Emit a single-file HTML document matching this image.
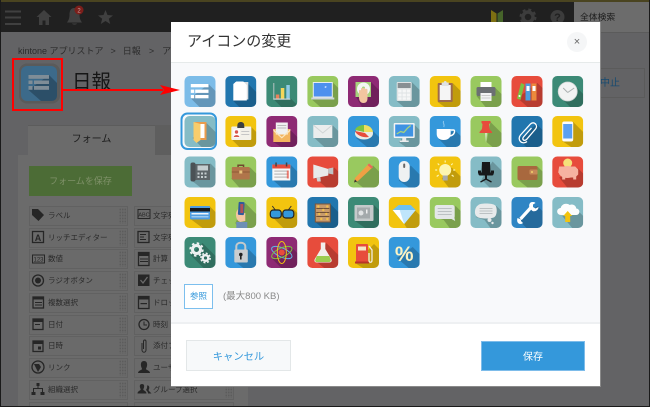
<!DOCTYPE html>
<html lang="ja"><head><meta charset="utf-8"><title>アイコンの変更</title>
<style>
html,body{margin:0;padding:0;width:650px;height:407px;overflow:hidden;background:#636365}
#w{position:absolute;left:0;top:0;width:650px;height:407px;overflow:hidden;background:#636365;font-family:"Liberation Sans","Noto Sans CJK JP",sans-serif}
.a{position:absolute;white-space:nowrap}
.row{position:absolute;width:99px;height:20px;box-sizing:border-box;background:#6a6a6a;border:1px solid #616161}
.row span{position:absolute;left:18px;top:0;font-size:7.500px;line-height:18px;color:#2a2a2a;white-space:nowrap}
.row i{position:absolute;right:1px;top:1px;width:7px;height:16px;background:radial-gradient(circle,#5c5c5c .8px,transparent 1px) 0 0/2.500px 3px}
svg{position:absolute;left:0;top:0}
.ic{filter:blur(.3px)}
.s{fill:#000;opacity:.2}
</style></head><body><div id="w">
<div class="a" style="left:0;top:0;width:650px;height:2px;background:#4a4420"></div>
<div class="a" style="left:0;top:2px;width:574px;height:30px;background:#202020"></div>
<div class="a" style="left:574px;top:2px;width:76px;height:31px;background:#6c6c6c;border-bottom:1px solid #5b5b5b;box-sizing:border-box"></div>
<div class="a" style="left:580px;top:10px;font-size:8.800px;line-height:14px;color:#1c1c1c">全体検索</div>
<div class="a" style="left:18px;top:43.500px;font-size:9px;line-height:14px;color:#2c2c2c">kintone アプリストア<span style="margin:0 7px 0 7px">&gt;</span>日報<span style="margin:0 8px 0 8px">&gt;</span>アプリの設定</div>
<div class="a" style="left:72px;top:67px;font-size:19.500px;line-height:30px;color:#161616">日報</div>
<div class="a" style="left:574px;top:68px;width:71px;height:30px;border:1px solid #5b5b5b;box-sizing:border-box"></div>
<div class="a" style="left:600px;top:76px;font-size:10px;line-height:16px;color:#174a70">中止</div>
<div class="a" style="left:18px;top:155px;width:230px;height:252px;background:#6b6b6b"></div>
<div class="a" style="left:28px;top:125px;width:127px;height:30px;background:#6b6b6b;border-top:1px solid #5c5c5c;box-sizing:border-box;text-align:center;font-size:10px;line-height:28px;color:#1c1c1c">フォーム</div>
<div class="a" style="left:155px;top:125px;width:93px;height:30px;background:#5e5e5e"></div>
<div class="a" style="left:29px;top:166px;width:103px;height:30px;background:#4c6c36;text-align:center;font-size:9px;line-height:30px;color:#7f9169">フォームを保存</div>

<div class="row" style="left:29px;top:206px"><span>ラベル</span><i></i></div>
<div class="row" style="left:29px;top:228px"><span>リッチエディター</span><i></i></div>
<div class="row" style="left:29px;top:249px"><span>数値</span><i></i></div>
<div class="row" style="left:29px;top:271px"><span>ラジオボタン</span><i></i></div>
<div class="row" style="left:29px;top:293px"><span>複数選択</span><i></i></div>
<div class="row" style="left:29px;top:315px"><span>日付</span><i></i></div>
<div class="row" style="left:29px;top:336px"><span>日時</span><i></i></div>
<div class="row" style="left:29px;top:358px"><span>リンク</span><i></i></div>
<div class="row" style="left:29px;top:380px"><span>組織選択</span><i></i></div>
<div class="row" style="left:29px;top:402px"></div>
<div class="row" style="left:134px;top:206px;width:100px"><span>文字列</span></div>
<div class="row" style="left:134px;top:228px;width:100px"><span>文字列</span></div>
<div class="row" style="left:134px;top:249px;width:100px"><span>計算</span></div>
<div class="row" style="left:134px;top:271px;width:100px"><span>チェック</span></div>
<div class="row" style="left:134px;top:293px;width:100px"><span>ドロップ</span></div>
<div class="row" style="left:134px;top:315px;width:100px"><span>時刻</span></div>
<div class="row" style="left:134px;top:336px;width:100px"><span>添付ファイル</span></div>
<div class="row" style="left:134px;top:358px;width:100px"><span>ユーザー</span></div>
<div class="row" style="left:134px;top:380px;width:100px"><span>グループ選択</span><i></i></div>
<div class="row" style="left:134px;top:402px;width:100px"></div>

<svg width="650" height="407" viewBox="0 0 650 407">
<g fill="#404040"><rect x="5" y="10.500" width="16" height="2"/><rect x="5" y="16.500" width="16" height="2"/><rect x="5" y="23" width="16" height="2"/>
<path d="M44 10 36.500 17H39V25H42.500V20.500H45.500V25H49V17H51.500Z"/>
<path d="M74.500 8C70 8 69.500 12 69.500 15C69.500 19 68 21 67 22.500H82C81 21 79.500 19 79.500 15C79.500 12 79 8 74.500 8ZM72 23.500C72.500 25 76.500 25 77 23.500Z"/>
<path d="M105.500 10 107.500 15 113 15.500 108.800 18.800 110.200 24 105.500 21 100.800 24 102.200 18.800 98 15.500 103.500 15Z"/></g>
<circle cx="79" cy="10" r="4.500" fill="#7c1e1a"/><text x="79" y="12.500" font-size="6" fill="#c9a5a3" text-anchor="middle" font-family="Liberation Sans">2</text>
<path d="M491 10 496.500 13.500V25L491 22Z" fill="#7d6f12"/><path d="M503 10 497.500 13.500V25L503 22Z" fill="#46642a"/>
<circle cx="528" cy="17" r="5" fill="none" stroke="#3c3c3c" stroke-width="3.500"/><circle cx="528" cy="17" r="7.500" fill="none" stroke="#3c3c3c" stroke-width="2" stroke-dasharray="3 2.900"/>
<circle cx="557.500" cy="17" r="7" fill="#3c3c3c"/><text x="557.500" y="21" font-size="11" font-weight="bold" fill="#202020" text-anchor="middle" font-family="Liberation Sans">?</text>
<rect x="19" y="63.500" width="41" height="40" rx="8" fill="#5a5a5a"/>
<rect x="21" y="66" width="36" height="35" rx="6" fill="#3c6a8a"/>
<path d="M49 75 57 83V95Q57 101 51 101H41L28.500 90Z" fill="#2c4f68"/>
<g fill="#7f8d97"><rect x="28.500" y="75" width="20.500" height="3.800"/><rect x="28.500" y="80.500" width="4" height="3.500"/><rect x="34" y="80.500" width="15" height="3.500"/><rect x="28.500" y="86" width="4" height="3.800"/><rect x="34" y="86" width="15" height="3.800"/></g>
<g fill="#262626">
<path d="M32 209H38L44 215 38.500 221 32 215Z"/>
<rect x="32.500" y="231.500" width="11" height="11" fill="none" stroke="#262626" stroke-width="1.300"/><text x="38" y="241" font-size="9" font-weight="bold" text-anchor="middle" font-family="Liberation Sans">A</text>
<rect x="32.500" y="255" width="12" height="8" fill="none" stroke="#262626"/><text x="38.500" y="261.500" font-size="6" text-anchor="middle" font-family="Liberation Sans">123</text>
<circle cx="38" cy="280.500" r="5.500" fill="none" stroke="#262626" stroke-width="1.300"/><circle cx="38" cy="280.500" r="3"/>
<rect x="33" y="297" width="10.500" height="11" fill="none" stroke="#262626" stroke-width="1.300"/><rect x="33" y="297" width="10.500" height="2.500"/><rect x="35" y="302" width="7" height="1"/><rect x="35" y="304.500" width="7" height="1"/>
<rect x="33" y="319" width="10" height="10.500" fill="none" stroke="#262626" stroke-width="1.300"/><rect x="33" y="319" width="10" height="3"/><rect x="35" y="324" width="5" height="1"/>
<rect x="33" y="341" width="10" height="10.500" fill="none" stroke="#262626" stroke-width="1.300"/><rect x="33" y="341" width="10" height="3"/><rect x="38" y="346.500" width="3" height="3"/>
<circle cx="38" cy="367" r="6" fill="none" stroke="#262626" stroke-width="1.300"/><path d="M34 364H39L41 367 38 372 36 368Z"/>
<path d="M36.500 383H39.500V386H36.500ZM37.500 386H38.500V388H43V392H44.500V395H40.500V392H42V389H34V392H35.500V395H31.500V392H33V388H37.500Z"/>
<rect x="138" y="209.500" width="12" height="9" fill="none" stroke="#262626"/><text x="144" y="216.500" font-size="5.500" text-anchor="middle" font-family="Liberation Sans">ABC</text>
<rect x="138" y="231.500" width="11" height="11" fill="none" stroke="#262626" stroke-width="1.300"/><rect x="140" y="234" width="6" height="1"/><rect x="140" y="236.500" width="4" height="1"/><rect x="140" y="239" width="6" height="1"/>
<rect x="138.500" y="252.500" width="10.500" height="13" fill="none" stroke="#262626" stroke-width="1.300"/><rect x="138.500" y="252.500" width="10.500" height="3.500"/><path d="M140 258.500H148V259.500H140ZM140 261H148V262H140Z"/>
<rect x="138" y="274.500" width="11.500" height="11.500"/><path d="M140.500 280 143 283 147.500 277" fill="none" stroke="#6a6a6a" stroke-width="1.300"/>
<rect x="138.500" y="296.500" width="10.500" height="12" fill="none" stroke="#262626" stroke-width="1.300"/><rect x="138.500" y="296.500" width="10.500" height="3"/><rect x="140.500" y="303" width="6.500" height="1.200"/>
<circle cx="144" cy="324.500" r="5" fill="none" stroke="#262626" stroke-width="1.300"/><path d="M144 321.500V325H147" fill="none" stroke="#262626"/>
<path d="M142 343V350C142 353 146 353 146 350V341.500C146 339.500 143.500 339.500 143.500 341.500V349" fill="none" stroke="#262626"/>
<path d="M144 361C141.500 361 140.500 363 141 366C141.300 367.500 142 368.500 142 369C142 370 138 370.500 138 373H150C150 370.500 146 370 146 369C146 368.500 146.700 367.500 147 366C147.500 363 146.500 361 144 361Z"/>
<path d="M142 384C140 384 139.500 385.500 140 387.500C140.300 388.500 140.700 389 140.700 389.500C140.700 390.500 137.500 391 137.500 393.500H146.500C146.500 391 143.300 390.500 143.300 389.500C143.300 389 143.700 388.500 144 387.500C144.500 385.500 144 384 142 384ZM148 385.500C149.500 386 149.500 388 149 389C148.500 390 148.500 390.500 149 391L151.500 393.500H148C148 391.500 146.500 390.500 146 390C147 388.500 147.500 387 147 385.500Z"/>
</g>
</svg>

<div class="a" style="left:171px;top:22px;width:430px;height:365px;background:#fff;border-right:1px solid #8a8a8a;border-bottom:1px solid #8a8a8a;box-sizing:border-box"></div>
<div class="a" style="left:171px;top:62px;width:429px;height:262px;background:#f8f9fb;border-top:1px solid #e6eaea;border-bottom:2px solid #eef0f2;box-sizing:border-box"></div>
<div class="a" style="left:187px;top:32px;font-size:15px;line-height:20px;color:#333">アイコンの変更</div>
<div class="a" style="left:567px;top:32px;width:20px;height:20px;border-radius:50%;background:#f5f6f7;text-align:center;font-size:11px;line-height:20px;color:#666;font-family:'Liberation Sans',sans-serif">×</div>
<div class="a" style="left:184px;top:284px;width:29px;height:25px;box-sizing:border-box;border:1px solid #7cbfee;background:#fff;text-align:center;font-size:8.500px;line-height:23px;color:#3498db">参照</div>
<div class="a" style="left:223px;top:290px;font-size:9.500px;line-height:14px;color:#8a8a8a">(最大800 KB)</div>
<div class="a" style="left:186px;top:340px;width:105px;height:31px;box-sizing:border-box;border:1px solid #e3e7e8;background:#f7f9fa;text-align:center;font-size:10.300px;line-height:34px;color:#3498db">キャンセル</div>
<div class="a" style="left:481px;top:341px;width:104px;height:30px;box-sizing:border-box;border:1px solid #7dbcea;background:#3498db;text-align:center;font-size:10px;line-height:32px;color:#fff">保存</div>

<svg class="ic" width="650" height="407" viewBox="0 0 650 407">
<defs><clipPath id="c"><rect width="31" height="31" rx="5"/></clipPath></defs>
<g transform="translate(184.500,76)" clip-path="url(#c)"><rect width="31" height="31" fill="#7cbce8"/><path class="s" d="M24 8 31 15V31H15L6 22Z"/><g fill="#fff"><rect x="6.300" y="8" width="17.700" height="3.300"/><rect x="6.300" y="13.600" width="3.400" height="3.300"/><rect x="10.700" y="13.600" width="13.300" height="3.300"/><rect x="6.300" y="19" width="3.400" height="3.300"/><rect x="10.700" y="19" width="13.300" height="3.300"/></g></g>
<g transform="translate(225.300,76)" clip-path="url(#c)"><rect width="31" height="31" fill="#2176ae"/><path class="s" d="M22 7 31 16V31H14L8 25Z"/><rect x="10" y="6" width="13" height="17.500" fill="#d9dde0"/><path d="M11 5.500H18L21.500 9V24.500H8V8Z" fill="#fff"/></g>
<g transform="translate(266.300,76)" clip-path="url(#c)"><rect width="31" height="31" fill="#3c8a76"/><path class="s" d="M24 22 31 29V31H15L7 23Z"/><rect x="7" y="7" width="1" height="16" fill="#b7c4c2"/><rect x="7" y="22.500" width="17" height="1.200" fill="#cfd8d8"/><rect x="9.500" y="18.500" width="3.500" height="4" fill="#e9825a"/><rect x="14.500" y="12" width="3.500" height="10.500" fill="#f4d65a"/><rect x="20" y="9" width="3.500" height="13.500" fill="#8fcbe6"/></g>
<g transform="translate(307.300,76)" clip-path="url(#c)"><rect width="31" height="31" fill="#99c95f"/><path class="s" d="M25 6 31 12V31H13L4 23Z"/><rect x="5.500" y="6" width="20" height="16" fill="#e8edf0"/><rect x="6.500" y="7" width="18" height="13.500" fill="#4d90ee"/><rect x="4" y="21.500" width="23" height="2" fill="#cfd6da"/><path d="M17 11l1.500-1 1 1-1.500 1z" fill="#cfe2ff"/></g>
<g transform="translate(348,76)" clip-path="url(#c)"><rect width="31" height="31" fill="#8e2a74"/><path class="s" d="M23 6 31 14V31H14L8 21Z"/><rect x="7.500" y="6" width="15.500" height="15" fill="#a6d27c"/><circle cx="15.500" cy="13" r="6.500" fill="#f4f6f4"/><circle cx="15.500" cy="12" r="1.500" fill="#a6d27c"/><path d="M11 15C11 13.500 13 13.500 13 15V13C13 11.500 15 11.500 15 13C15 11.500 17 11.500 17 13.500C17 12.500 19.500 12.500 19.500 14V22C19.500 25 18.500 27 15.500 27C12 27 11 24 11 21Z" fill="#f3c5a0"/></g>
<g transform="translate(388.700,76)" clip-path="url(#c)"><rect width="31" height="31" fill="#85bcc6"/><path class="s" d="M23 6 31 14V31H15L8 25Z"/><rect x="8" y="6" width="15" height="19" rx="1" fill="#dfe3e4"/><rect x="9" y="7" width="13" height="5" fill="#888f93"/><g fill="#f6f7f7"><rect x="9.500" y="13.500" width="3.400" height="3"/><rect x="13.800" y="13.500" width="3.400" height="3"/><rect x="18" y="13.500" width="3.400" height="3"/><rect x="9.500" y="17.500" width="3.400" height="3"/><rect x="13.800" y="17.500" width="3.400" height="3"/><rect x="18" y="17.500" width="3.400" height="3"/><rect x="9.500" y="21.300" width="3.400" height="2.500"/><rect x="13.800" y="21.300" width="3.400" height="2.500"/><rect x="18" y="21.300" width="3.400" height="2.500"/></g></g>
<g transform="translate(429.700,76)" clip-path="url(#c)"><rect width="31" height="31" fill="#f2c40f"/><path class="s" d="M23 7 31 15V31H15L8 26Z"/><rect x="8" y="7" width="15" height="19" rx="1" fill="#9e6a4c"/><rect x="10" y="9" width="11" height="15" fill="#f5f5f5"/><path d="M12 6.500H14C14 4.500 17 4.500 17 6.500H19V10H12Z" fill="#dfe2e3"/></g>
<g transform="translate(470.500,76)" clip-path="url(#c)"><rect width="31" height="31" fill="#99c95f"/><path class="s" d="M25 12 31 18V31H15L6 20Z"/><rect x="10" y="6" width="11" height="6" fill="#fff"/><rect x="6" y="11" width="19" height="9" rx="1.500" fill="#6b6f72"/><rect x="10" y="17" width="11" height="8" fill="#f2f3f3"/><rect x="11" y="19" width="9" height="1" fill="#ccc"/><rect x="11" y="21.500" width="9" height="1" fill="#ccc"/></g>
<g transform="translate(511.500,76)" clip-path="url(#c)"><rect width="31" height="31" fill="#e74c3c"/><path class="s" d="M26 7 31 12V31H16L6 22Z"/><path d="M9.500 7 13 8.500 9 24 5.500 22.500Z" fill="#7cc242"/><rect x="14" y="7.500" width="5" height="17" fill="#4d9de0"/><rect x="20" y="7.500" width="5" height="17" fill="#ec8a3c"/><rect x="15" y="10" width="3" height="5" fill="#fff"/><rect x="21" y="10" width="3" height="5" fill="#fff"/><circle cx="8" cy="20" r="1" fill="#fff"/></g>
<g transform="translate(552.200,76)" clip-path="url(#c)"><rect width="31" height="31" fill="#3c8a76"/><path class="s" d="M22 9 31 18V31H18L9 22Z"/><circle cx="15.500" cy="15.500" r="9.500" fill="#f2f3f3" stroke="#d3d6d6" stroke-width=".8"/><path d="M15.500 16.500 11 12M15.500 16.500 22 12" stroke="#aab0b0" stroke-width="1" fill="none"/></g>
<rect x="181.500" y="113.500" width="34.500" height="35.500" rx="6" fill="none" stroke="#3498db" stroke-width="2"/>
<g transform="translate(184.500,116)" clip-path="url(#c)"><rect width="31" height="31" fill="#85bcc6"/><path class="s" d="M22 7 31 16V31H17L8 22Z"/><path d="M10 6H22V24H16V22H20V8H10Z" fill="#ea9b4c"/><rect x="16" y="8" width="4" height="14" fill="#fff"/><path d="M9 6 16 8V24L12 27 9 24Z" fill="#f8cd6c"/></g>
<g transform="translate(225.300,116)" clip-path="url(#c)"><rect width="31" height="31" fill="#f2c40f"/><path class="s" d="M26 11 31 16V31H14L6 23Z"/><rect x="6" y="10.500" width="20" height="13.500" rx="1" fill="#f3f1ea"/><path d="M12 10C12 7 13.500 6 15.500 6C17.500 6 19 7 19 10V12H12Z" fill="#3b3f42"/><rect x="8" y="13.500" width="6.500" height="8" fill="#fff"/><circle cx="11.200" cy="16" r="1.700" fill="#d8584e"/><path d="M8.500 21C8.500 18.500 14 18.500 14 21Z" fill="#d8584e"/><rect x="16" y="15" width="8" height="1" fill="#c6c6c6"/><rect x="16" y="18" width="8" height="1" fill="#c6c6c6"/></g>
<g transform="translate(266.300,116)" clip-path="url(#c)"><rect width="31" height="31" fill="#8e2a74"/><path class="s" d="M24 14 31 21V31H15L7 26Z"/><rect x="7" y="13" width="17" height="13" fill="#f3b55f"/><rect x="9.500" y="6.500" width="12" height="12" fill="#f0f1f1"/><rect x="11" y="9" width="9" height="1" fill="#bbb"/><rect x="11" y="11.500" width="9" height="1" fill="#bbb"/><path d="M7 13 15.500 21 24 13V15L15.500 22.500 7 15Z" fill="#fbe6c0"/></g>
<g transform="translate(307.300,116)" clip-path="url(#c)"><rect width="31" height="31" fill="#85bcc6"/><path class="s" d="M25 9 31 15V31H17L6 21Z"/><rect x="6" y="9" width="19" height="13" fill="#ebeded"/><path d="M6 9 15.500 17 25 9" fill="none" stroke="#d0d4d5"/></g>
<g transform="translate(348,116)" clip-path="url(#c)"><rect width="31" height="31" fill="#3498db"/><path class="s" d="M24 14 31 21V31H19L8 22Z"/><ellipse cx="16" cy="17.500" rx="9" ry="6" fill="#e8ebe6"/><path d="M16 9C12 9 8 11 7 14L16 16Z" fill="#7cc242"/><path d="M16 9C20 9 24 11 25 16L16 16Z" fill="#f0de5d"/><path d="M7 15 17 17 21 21C16 22 9 20 7 15Z" fill="#e74c3c"/></g>
<g transform="translate(388.700,116)" clip-path="url(#c)"><rect width="31" height="31" fill="#85bcc6"/><path class="s" d="M26 9 31 14V31H17L10 26Z"/><rect x="5" y="7" width="21" height="15" rx="1" fill="#f2f3f3"/><rect x="6.500" y="8.500" width="18" height="12" fill="#3f93e3"/><path d="M8 18 12 15.500 15 16.500 19 12 22 9.500" stroke="#a6d27c" stroke-width="1.300" fill="none"/><path d="M13.500 22H17.500V24.500H20V26H11V24.500H13.500Z" fill="#eaeced"/></g>
<g transform="translate(429.700,116)" clip-path="url(#c)"><rect width="31" height="31" fill="#3498db"/><path class="s" d="M25 14 31 20V31H17L9 23Z"/><path d="M7 13H21V18C21 21 19 24 14 24C9 24 7 21 7 18Z" fill="#fff"/><path d="M21 14H24C25.500 14 25.500 19 20 20" fill="none" stroke="#fff" stroke-width="1.500"/><path d="M14 5C12.500 7 15.500 8 14 11" fill="none" stroke="#8cc7ef"/></g>
<g transform="translate(470.500,116)" clip-path="url(#c)"><rect width="31" height="31" fill="#99c95f"/><path class="s" d="M20 6 31 17V31H22L16 26Z"/><path d="M11 5H20V7L18.500 8 19 13 21.500 16V17H9V16L11.500 13 12 8 11 7Z" fill="#e74c3c"/><path d="M14.800 17H16.200L15.500 27Z" fill="#eee"/></g>
<g transform="translate(511.500,116)" clip-path="url(#c)"><rect width="31" height="31" fill="#2176ae"/><path class="s" d="M25 8 31 14V31H15L7 24Z"/><path d="M20 12 12 21C10 23.500 12.800 25.500 15 23.500L24 13C27 9.500 22.500 4.500 19 8L9 19C5 24 11 29.500 15.500 25.500" fill="none" stroke="#fff" stroke-width="1.300"/></g>
<g transform="translate(552.200,116)" clip-path="url(#c)"><rect width="31" height="31" fill="#f2c40f"/><path class="s" d="M21 6 31 16V31H19L10 25Z"/><rect x="10" y="5.500" width="11" height="20" rx="2" fill="#fbfbfb"/><rect x="11" y="8" width="9" height="14.500" fill="#5aa0f2"/></g>
<g transform="translate(184.500,156.500)" clip-path="url(#c)"><rect width="31" height="31" fill="#85bcc6"/><path class="s" d="M26 7 31 12V31H16L7 24Z"/><rect x="6" y="6" width="5" height="19" rx="2" fill="#4b5256"/><rect x="11" y="7.500" width="14.500" height="16" fill="#5d6569"/><rect x="13" y="9" width="10.500" height="5" fill="#c5cdd0"/><g fill="#c5cdd0"><rect x="13" y="16" width="2" height="2"/><rect x="16.500" y="16" width="2" height="2"/><rect x="20" y="16" width="2" height="2"/><rect x="13" y="19.500" width="2" height="2"/><rect x="16.500" y="19.500" width="2" height="2"/><rect x="20" y="19.500" width="2" height="2"/></g></g>
<g transform="translate(225.300,156.500)" clip-path="url(#c)"><rect width="31" height="31" fill="#99c95f"/><path class="s" d="M25 11 31 17V31H14L6 22Z"/><path d="M12 11V8H19V11H17.500V9.500H13.500V11Z" fill="#6e4a2e"/><rect x="6.500" y="10.500" width="18" height="12.500" rx="1" fill="#b0754a"/><rect x="6.500" y="15" width="18" height="1" fill="#8e5b37"/><rect x="14" y="14" width="3" height="3" fill="#e8c27a"/></g>
<g transform="translate(266.300,156.500)" clip-path="url(#c)"><rect width="31" height="31" fill="#3498db"/><path class="s" d="M24 8 31 15V31H15L6 23Z"/><rect x="6" y="8" width="18" height="16" fill="#f7f7f7"/><rect x="6" y="8" width="18" height="4" fill="#e74c3c"/><rect x="9" y="6" width="1.500" height="4" fill="#444"/><rect x="19.500" y="6" width="1.500" height="4" fill="#444"/><g fill="#bbb"><rect x="8" y="14" width="14" height="1.200"/><rect x="8" y="17" width="14" height="1.200"/><rect x="8" y="20" width="14" height="1.200"/></g><rect x="20.500" y="14" width="2" height="8" fill="#e74c3c" opacity=".7"/></g>
<g transform="translate(307.300,156.500)" clip-path="url(#c)"><rect width="31" height="31" fill="#e74c3c"/><path class="s" d="M27 11 31 15V31H19L7 21Z"/><path d="M6 8 21 12.500V19L6 22Z" fill="#e8e9e9"/><path d="M21 12 26 11V18L21 17Z" fill="#bfc3c4"/><path d="M9 21 13 20.500 13.500 25H10Z" fill="#d0d2d3"/></g>
<g transform="translate(348,156.500)" clip-path="url(#c)"><rect width="31" height="31" fill="#99c95f"/><path class="s" d="M25 9 31 15V31H15L6 24Z"/><path d="M21 7 25 10.500 10 24.500 6 26 7 21.500Z" fill="#f0a044"/><path d="M21 7 25 10.500 23.500 12 19.500 8.500Z" fill="#e8685c"/><path d="M6 26 7 23 9 25Z" fill="#333"/></g>
<g transform="translate(388.700,156.500)" clip-path="url(#c)"><rect width="31" height="31" fill="#3498db"/><path class="s" d="M22 9 31 18V31H20L10 24Z"/><rect x="10" y="4.500" width="11" height="21" rx="5.500" fill="#eff1f2"/><rect x="14.500" y="7" width="2" height="4.500" rx="1" fill="#666"/></g>
<g transform="translate(429.700,156.500)" clip-path="url(#c)"><rect width="31" height="31" fill="#f2c40f"/><path class="s" d="M22 11 31 20V31H19L12 22Z"/><circle cx="15.500" cy="13.500" r="6" fill="#fdf5b0"/><rect x="13" y="19" width="5" height="5" fill="#a9acad"/><path d="M15.500 4V6M8 7 9.500 8.500M23 7 21.500 8.500M5.500 13.500H7.500M23.500 13.500H25.500M7 20 9 18.500M24 20 22 18.500" stroke="#fdf5b0" stroke-width="1.200"/></g>
<g transform="translate(470.500,156.500)" clip-path="url(#c)"><rect width="31" height="31" fill="#85bcc6"/><path class="s" d="M22 5 31 14V31H19L11 23Z"/><path d="M11.500 5.500H19.500L20 16H11Z" fill="#17181a"/><rect x="7.500" y="14" width="3" height="3" fill="#17181a"/><rect x="20.500" y="14" width="3" height="3" fill="#17181a"/><rect x="8" y="16" width="15" height="3" rx="1.500" fill="#17181a"/><rect x="14.500" y="19" width="2" height="4" fill="#17181a"/><path d="M10 25.500 15.500 22.500 21 25.500" stroke="#17181a" stroke-width="1.300" fill="none"/></g>
<g transform="translate(511.500,156.500)" clip-path="url(#c)"><rect width="31" height="31" fill="#99c95f"/><path class="s" d="M26 10 31 15V31H16L6 23Z"/><rect x="6" y="9.500" width="20" height="14" rx="1.500" fill="#a8683e"/><rect x="18" y="13" width="8" height="5" rx="1" fill="#c78a58"/><circle cx="20.500" cy="15.500" r="1" fill="#f2d16b"/></g>
<g transform="translate(552.200,156.500)" clip-path="url(#c)"><rect width="31" height="31" fill="#e74c3c"/><path class="s" d="M26 12 31 17V31H15L7 21Z"/><circle cx="15.500" cy="6.500" r="4.500" fill="#f5e17a"/><path d="M7 10H23L26 13V18L24 20V23H21V21H13V23H10V20L6 16Z" fill="#f6b3a1"/><ellipse cx="15" cy="15.500" rx="8.500" ry="6" fill="#f6b3a1"/></g>
<g transform="translate(184.500,197)" clip-path="url(#c)"><rect width="31" height="31" fill="#f2c40f"/><path class="s" d="M25 9 31 15V31H18L6 22Z"/><rect x="5.500" y="9" width="20" height="13.500" rx="1" fill="#4f9de0"/><rect x="5.500" y="11" width="20" height="3.500" fill="#15181a"/><rect x="7" y="16" width="17" height="1.500" fill="#eef5fb"/><rect x="7" y="19" width="17" height="1.500" fill="#9dcbef"/></g>
<g transform="translate(225.300,197)" clip-path="url(#c)"><rect width="31" height="31" fill="#99c95f"/><path class="s" d="M20 6 31 17V31H13L10 26Z"/><path d="M11 15 15 8 15 17 20 16 20 24 15 25C11 24 10 18 11 15Z" fill="#f3c5a0"/><rect x="13" y="5" width="6" height="13" rx="1" fill="#2f5b9c" transform="rotate(4 16 11)"/><rect x="15" y="7" width="3" height="9" fill="#e74c3c" opacity=".7"/><rect x="11" y="25" width="11" height="6" fill="#6e8fb5"/></g>
<g transform="translate(266.300,197)" clip-path="url(#c)"><rect width="31" height="31" fill="#f2c40f"/><path class="s" d="M27 12 31 16V31H17L5 19Z"/><path d="M9 13 6 9M22 13 25 9" stroke="#333" stroke-width="1"/><rect x="4" y="13" width="11" height="8" rx="3" fill="#3498db" stroke="#222" stroke-width="1.200"/><rect x="16.500" y="13" width="11" height="8" rx="3" fill="#3498db" stroke="#222" stroke-width="1.200"/></g>
<g transform="translate(307.300,197)" clip-path="url(#c)"><rect width="31" height="31" fill="#2176ae"/><path class="s" d="M23 7 31 15V31H15L8 25Z"/><rect x="8" y="7" width="15" height="18" fill="#c79a6b" stroke="#7d5638" stroke-width="1"/><g fill="#5b3f28"><rect x="9" y="11" width="13" height=".8"/><rect x="9" y="15" width="13" height=".8"/><rect x="9" y="19" width="13" height=".8"/></g><g fill="#f3c048"><circle cx="11" cy="9.500" r="1.200"/><circle cx="16" cy="13" r="1.200"/><circle cx="20" cy="9.500" r="1.200"/><circle cx="12" cy="17" r="1.200"/><circle cx="19" cy="17" r="1.200"/><circle cx="14" cy="22" r="1.200"/><circle cx="20" cy="22" r="1.200"/></g></g>
<g transform="translate(348,197)" clip-path="url(#c)"><rect width="31" height="31" fill="#3c8a76"/><path class="s" d="M26 8 31 13V31H17L7 24Z"/><rect x="6.500" y="8" width="19" height="16" rx="1" fill="#c4c9ca"/><rect x="9" y="10.500" width="13" height="11" fill="#a4aaac"/><circle cx="13" cy="16" r="2.500" fill="#dfe2e3"/><rect x="18" y="12.500" width="1.500" height="4" fill="#eee"/></g>
<g transform="translate(388.700,197)" clip-path="url(#c)"><rect width="31" height="31" fill="#f2c40f"/><path class="s" d="M26 13 31 18V31H18L15 26Z"/><path d="M10 8H22L27 13 15.500 27 4 13Z" fill="#6ec1f0"/><path d="M4 13H27L15.500 27Z" fill="#bfe5fb"/><path d="M4 13 15.500 27 11 13Z" fill="#fff"/></g>
<g transform="translate(429.700,197)" clip-path="url(#c)"><rect width="31" height="31" fill="#99c95f"/><path class="s" d="M26 9 31 14V31H20L14 23 5 20Z"/><rect x="5" y="8" width="20" height="14" rx="2.500" fill="#e4e7e8"/><path d="M20 21 25.500 24 24 18Z" fill="#e4e7e8"/><g fill="#bcc1c3"><rect x="8" y="11" width="14" height="1"/><rect x="8" y="14" width="14" height="1"/><rect x="8" y="17" width="14" height="1"/></g></g>
<g transform="translate(470.500,197)" clip-path="url(#c)"><rect width="31" height="31" fill="#85bcc6"/><path class="s" d="M26 9 31 14V31H20L14 23 5 20Z"/><path d="M8 8C9 6 22 6 24 8C27 9 27 18 24 20C22 22 9 22 7 20C3 18 4 10 8 8Z" fill="#e7eaeb"/><circle cx="19" cy="23" r="2" fill="#e7eaeb"/><circle cx="22" cy="26" r="1.200" fill="#e7eaeb"/><g fill="#bcc1c3"><rect x="9" y="11" width="13" height="1"/><rect x="9" y="13.500" width="13" height="1"/><rect x="9" y="16" width="13" height="1"/></g></g>
<g transform="translate(511.500,197)" clip-path="url(#c)"><rect width="31" height="31" fill="#2f85c4"/><path class="s" d="M26 9 31 14V31H15L6 22Z"/><path d="M19 11 9 22" stroke="#fff" stroke-width="3.200"/><path d="M21 5C18 5 17 8 18 11L21 14C24 15 27 13 27 10L24 11.500 21.500 10 21.500 7.500 24 6C23 5 22 5 21 5ZM6 21C5 24 6 27 9 27 10 27 11 26.500 11.500 26L9.500 24 9.500 22.500Z" fill="#fff"/></g>
<g transform="translate(552.200,197)" clip-path="url(#c)"><rect width="31" height="31" fill="#85bcc6"/><path class="s" d="M27 15 31 19V31H20L10 19Z"/><path d="M9 18C4 18 3.500 11.500 8.500 11C9.500 7 14 5.500 17.500 8C21 6.500 24 9 24 11.500C28.500 12 28 18 24 18Z" fill="#fdfdfd"/><path d="M15.500 14 20 19H18V25H13V19H11Z" fill="#f2c40f"/></g>
<g transform="translate(184.500,237)" clip-path="url(#c)"><rect width="31" height="31" fill="#3c8a76"/><path class="s" d="M18 6 31 19V31H19L6 18Z"/><g fill="none" stroke="#eef1f1"><circle cx="12" cy="12.500" r="4" stroke-width="3"/><circle cx="12" cy="12.500" r="6.300" stroke-width="1.800" stroke-dasharray="2.500 2.450"/><circle cx="21" cy="21" r="2.800" stroke-width="2.400"/><circle cx="21" cy="21" r="4.700" stroke-width="1.500" stroke-dasharray="2 1.700"/></g></g>
<g transform="translate(225.300,237)" clip-path="url(#c)"><rect width="31" height="31" fill="#3498db"/><path class="s" d="M23 12 31 20V31H18L9 24Z"/><path d="M11 13V9.500C11 4.500 20 4.500 20 9.500V13" fill="none" stroke="#c5c9cb" stroke-width="2"/><rect x="9" y="12.500" width="13.500" height="13" rx="1" fill="#c9cdcf"/><circle cx="15.500" cy="17.500" r="1.800" fill="#222"/><rect x="14.700" y="18" width="1.600" height="4.500" fill="#222"/></g>
<g transform="translate(266.300,237)" clip-path="url(#c)"><rect width="31" height="31" fill="#8e2a74"/><path class="s" d="M25 10 31 16V31H15L6 22Z"/><g fill="none" stroke-width="1"><ellipse cx="15.500" cy="15.500" rx="11" ry="4.500" stroke="#5fb5e5" transform="rotate(25 15.500 15.500)"/><ellipse cx="15.500" cy="15.500" rx="11" ry="4.500" stroke="#7cc242" transform="rotate(-25 15.500 15.500)"/><ellipse cx="15.500" cy="15.500" rx="4.500" ry="11" stroke="#f2c40f"/></g><circle cx="15.500" cy="15.500" r="3" fill="#e74c3c"/></g>
<g transform="translate(307.300,237)" clip-path="url(#c)"><rect width="31" height="31" fill="#e74c3c"/><path class="s" d="M19 6 31 18V31H17L8 24Z"/><path d="M13.500 5.500H18V12L24 22C25 24 24 25.500 22 25.500H9.500C7.500 25.500 6.500 24 7.500 22L13.500 12Z" fill="#f2eeea"/><path d="M9.500 19H22L23.500 23C23.500 24.500 23 25 22 25H9.500C8 25 7.800 24 8 23Z" fill="#9ccc4f"/></g>
<g transform="translate(348,237)" clip-path="url(#c)"><rect width="31" height="31" fill="#f2c40f"/><path class="s" d="M26 7 31 12V31H15L7 26Z"/><rect x="8" y="7" width="12" height="19" rx="1" fill="#e74c3c"/><rect x="10" y="9.500" width="8" height="4" fill="#f4e8c8"/><rect x="7" y="24.500" width="14" height="2" fill="#b8352a"/><path d="M21 9 24 13V23C24 26 21 26 21 23V16" fill="none" stroke="#f2ede0" stroke-width="1.300"/></g>
<g transform="translate(388.700,237)" clip-path="url(#c)"><rect width="31" height="31" fill="#3498db"/><path class="s" d="M24 10 31 17V31H20L8 21Z"/><text x="15.500" y="24" font-size="21" font-weight="bold" fill="#fbf3c4" text-anchor="middle" font-family="Liberation Sans">%</text></g>
</svg>
<svg width="650" height="407" viewBox="0 0 650 407">
<rect x="13" y="59" width="49" height="51" fill="none" stroke="#f00" stroke-width="2"/>
<rect x="63" y="89" width="100" height="2" fill="#f00"/>
<path d="M160 85 180 90 160 95 164 90Z" fill="#f00"/>
</svg>
<div class="a" style="left:0;top:406px;width:650px;height:1px;background:#1a1a1a"></div>
<div class="a" style="left:0;top:0;width:1px;height:407px;background:#1a1a1a"></div>
<div class="a" style="left:649px;top:0;width:1px;height:407px;background:#1a1a1a"></div>
</div></body></html>
